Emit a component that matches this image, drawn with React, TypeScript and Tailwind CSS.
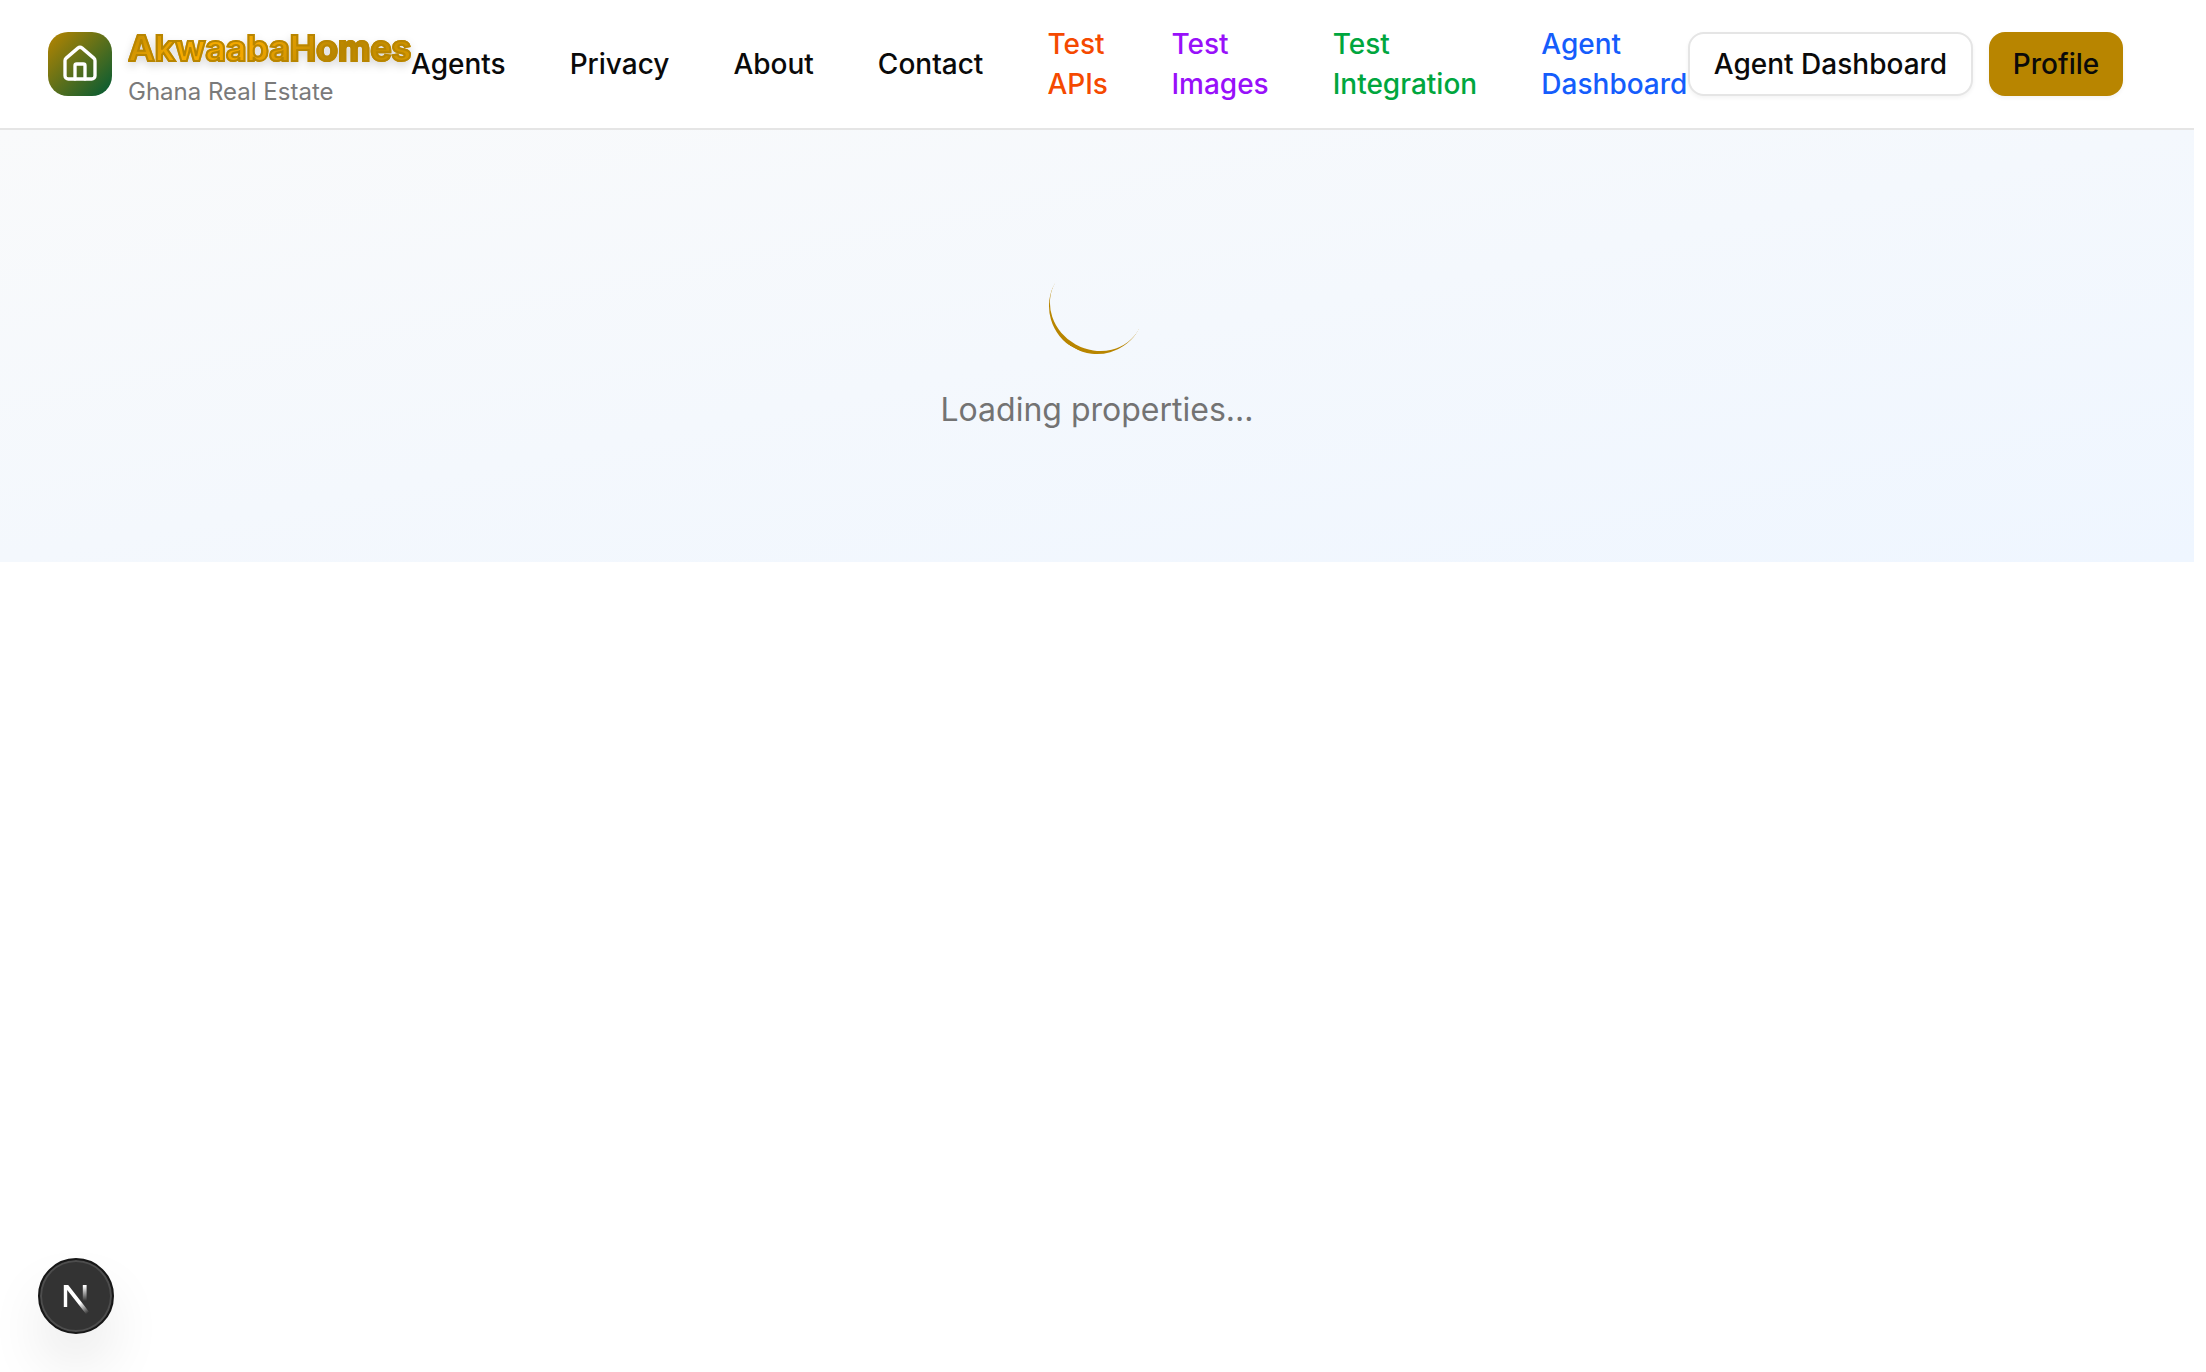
import React from 'react';
import { House } from 'lucide-react';

const links = [
  { label: 'Agents', className: 'text-[#0a0a0a]' },
  { label: 'Privacy', className: 'text-[#0a0a0a]' },
  { label: 'About', className: 'text-[#0a0a0a]' },
  { label: 'Contact', className: 'text-[#0a0a0a]' },
  { label: 'Test APIs', className: 'text-[#f54900] w-[60px]' },
  { label: 'Test Images', className: 'text-[#9810fa] w-[97.5px]' },
  { label: 'Test Integration', className: 'text-[#00a63e] w-[145px]' },
  { label: 'Agent Dashboard', className: 'text-[#155dfc] w-[147px]' },
];

function Logo() {
  return (
    <div className="flex w-[363px] shrink-0 items-center gap-4">
      <div className="flex size-16 shrink-0 items-center justify-center rounded-[20px] bg-[linear-gradient(135deg,#b88500,#005a35)]">
        <House className="size-10 text-white" strokeWidth={2} />
      </div>
      <div className="flex w-[283px] flex-col">
        <span className="overflow-x-clip bg-[linear-gradient(135deg,#b88500_0%,#f5aa00_25%,#f2a700_45%,#b88500_72%,#dc9c00_100%)] bg-clip-text text-[36px] leading-[56px] font-bold tracking-[-0.36px] whitespace-nowrap text-transparent [-webkit-text-stroke:2px_#b88500] [filter:drop-shadow(0_4px_4px_rgb(0_0_0/0.15))]">
          AkwaabaHomes
        </span>
        <span className="text-[24px] leading-8 text-[#7a7a7a]">Ghana Real Estate</span>
      </div>
    </div>
  );
}

export default function App() {
  return (
    <div className="relative h-[1372px] w-full overflow-hidden bg-white font-['Inter',sans-serif] text-[#0a0a0a]">
      <div className="w-[2194px]">
        <header className="flex h-[130px] items-center border-b-2 border-[#e5e5e5] pl-12">
          <Logo />
          <nav className="flex w-[1277px] shrink-0 items-center gap-16 text-[28px] leading-10 font-medium">
            {links.map((l) => (
              <a key={l.label} className={l.className}>{l.label}</a>
            ))}
          </nav>
          <div className="flex items-center gap-4 text-[28px] leading-10 font-medium">
            <button className="h-16 w-[285px] rounded-[16px] border-2 border-[#e5e5e5] bg-white whitespace-nowrap shadow-[0_2px_4px_rgb(0_0_0/0.05)]">Agent Dashboard</button>
            <button className="h-16 w-[134px] rounded-[16px] bg-[#b88500] shadow-[0_2px_4px_rgb(0_0_0/0.05)]">Profile</button>
          </div>
        </header>
        <main className="flex h-[432px] flex-col items-center bg-linear-to-br from-[#f9fafb] to-[#eff6ff] pt-32">
          <div className="size-24 rotate-[29deg] rounded-full border-b-4 border-[#b88500]" />
          <p className="mt-8 text-[32px] leading-[48px] text-[#737373]">Loading properties...</p>
        </main>
      </div>
      <div className="absolute top-[1258px] left-[38px] flex size-[76px] items-center justify-center rounded-full border-2 border-[#171717] bg-[#333] shadow-[inset_0_0_0_2px_#4d4d4d,0_32px_64px_-16px_rgb(0_0_0/0.24)]">
        <svg className="size-20 shrink-0" viewBox="0 0 40 40" fill="none">
          <defs>
            <linearGradient id="diagonal" x1="22" y1="23.5" x2="26" y2="28.5" gradientUnits="userSpaceOnUse">
              <stop stopColor="white" />
              <stop offset="1" stopColor="white" stopOpacity="0" />
            </linearGradient>
            <linearGradient id="stem" x1="24" y1="15" x2="24" y2="22.5" gradientUnits="userSpaceOnUse">
              <stop stopColor="white" />
              <stop offset="1" stopColor="white" stopOpacity="0" />
            </linearGradient>
          </defs>
          <path d="M13.9 14.5h2.2L26.6 28l-1.5 1.1L15.6 17v8.5h-1.7z" fill="url(#diagonal)" />
          <path d="M23.4 14.5h1.9v8h-1.9z" fill="url(#stem)" />
        </svg>
      </div>
    </div>
  );
}
